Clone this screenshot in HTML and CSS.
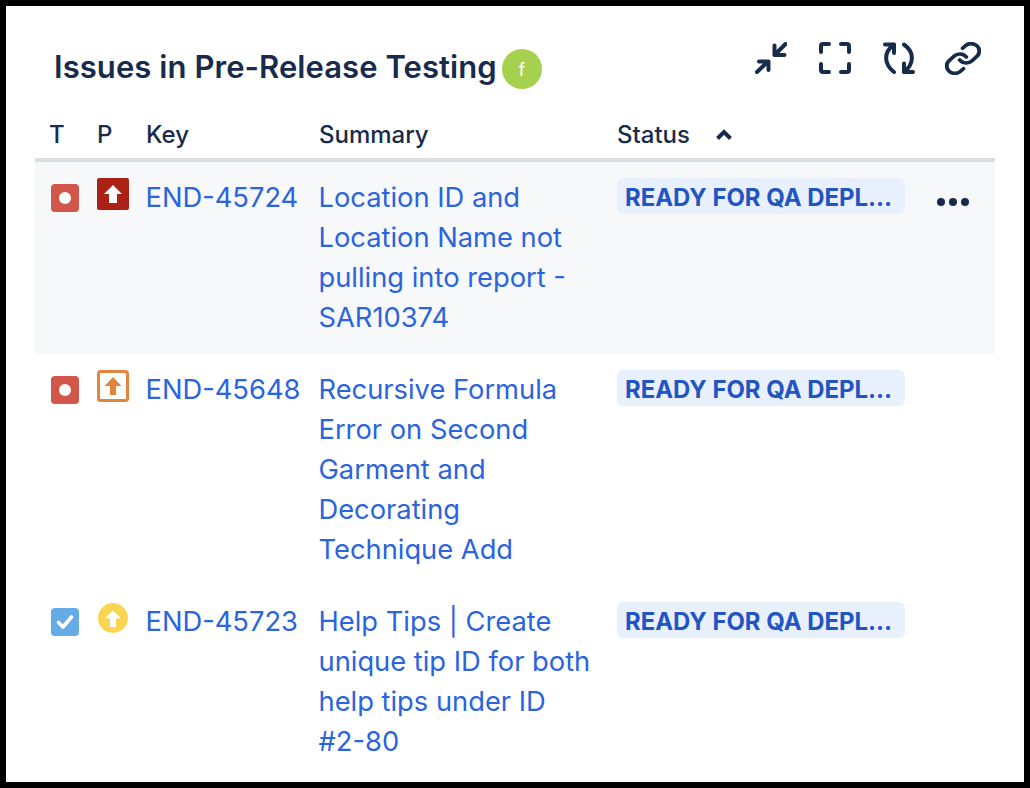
FILE: index.html
```html
<!DOCTYPE html>
<html lang="en">
<head>
<meta charset="utf-8">
<title>Issues in Pre-Release Testing</title>
<link rel="stylesheet" href="styles.css">
</head>
<body>
<main class="frame">
  <header class="top">
    <div class="title-wrap">
      <h1 class="title">Issues in Pre-Release Testing</h1>
      <span class="avatar">f</span>
    </div>
    <div class="tools">
      <svg class="tool" viewBox="0 0 32 32"><path d="M2 30 13 19.500M4 19.500h9.500V28M30.500 2 19.500 13M19.500 3.500V13H29.500"/></svg>
      <svg class="tool" viewBox="0 0 32 32"><path d="M2 10V4a2 2 0 0 1 2-2h6M22 2h6a2 2 0 0 1 2 2v6M30 22v6a2 2 0 0 1-2 2h-6M10 30H4a2 2 0 0 1-2-2v-6"/></svg>
      <svg class="tool" viewBox="0 0 32 32"><path d="M2 2.500H11V11M11 2.500C.5 10 .5 22 11 30M21 2.500C31.500 10 31.500 22 21 30M30 30H21V21.500"/></svg>
      <svg class="link" viewBox="1 1 22 22" preserveAspectRatio="none"><path d="M10 13a5 5 0 0 0 7.540.540l3-3a5 5 0 0 0-7.070-7.070l-1.720 1.710M14 11a5 5 0 0 0-7.540-.540l-3 3a5 5 0 0 0 7.070 7.070l1.710-1.710"/></svg>
    </div>
  </header>

  <div class="row head">
    <div class="narrow">T</div>
    <div class="narrow">P</div>
    <div>Key</div>
    <div>Summary</div>
    <div class="status-head">Status
      <svg class="sort" viewBox="0 0 18 12"><path d="M2.500 9.500 9 3l6.500 6.500"/></svg>
    </div>
  </div>

  <div class="row issue hover">
    <div><span class="type bug"><i class="dot"></i></span></div>
    <div>
      <svg class="prio" viewBox="0 0 32 32"><rect width="32" height="32" rx="2" fill="#ab2116"/><path class="arrow" d="M16 7 25 16H20V25H12V16H7Z"/></svg>
    </div>
    <a class="key" href="#">END-45724</a>
    <a class="summary" href="#">Location ID and Location Name not pulling into report - SAR10374</a>
    <div><span class="lozenge">READY FOR QA DEPL...</span></div>
    <div class="more"><i></i><i></i><i></i></div>
  </div>

  <div class="row issue">
    <div><span class="type bug"><i class="dot"></i></span></div>
    <div>
      <svg class="prio" viewBox="0 0 32 32"><rect x="1.500" y="1.500" width="29" height="29" rx="2" fill="#fff" stroke="#e5843f" stroke-width="3"/><path fill="#e5843f" d="M16 7 24.500 16H19V25H13V16H7.500Z"/></svg>
    </div>
    <a class="key" href="#">END-45648</a>
    <a class="summary" href="#">Recursive Formula Error on Second Garment and Decorating Technique Add</a>
    <div><span class="lozenge">READY FOR QA DEPL...</span></div>
  </div>

  <div class="row issue">
    <div><span class="type task"><svg class="check" viewBox="0 0 20 20"><path d="M3.500 10.500 8 15l8.500-10"/></svg></span></div>
    <div>
      <svg class="prio" viewBox="0 0 32 32"><circle cx="16" cy="16" r="15" fill="#f9d651"/><path class="arrow" d="M16 8.500 24 16.500H19V25H13V16.500H8Z"/></svg>
    </div>
    <a class="key" href="#">END-45723</a>
    <a class="summary" href="#">Help Tips | Create unique tip ID for both help tips under ID #2-80</a>
    <div><span class="lozenge">READY FOR QA DEPL...</span></div>
  </div>
</main>
</body>
</html>
```
FILE: styles.css
```css
* { box-sizing: border-box; }
html, body { margin: 0; height: 100%; }
body { background: #000; padding: 6px; font-family: Inter, "Liberation Sans", sans-serif; color: #172b4d; }
.frame { height: 776px; background: #fff; padding: 0 29px; overflow: hidden; }

.top { display: flex; justify-content: space-between; height: 116px; }
.title-wrap { display: flex; align-items: flex-start; padding: 39px 0 0 19px; }
.title { margin: 0; font-size: 31px; letter-spacing: .070px; line-height: 44px; font-weight: 600; color: #172b4d; }
.avatar { width: 40px; height: 40px; margin: 4px 0 0 5px; border-radius: 50%; background: #a5d14f; color: #fff; font-size: 18px; display: flex; align-items: center; justify-content: center; }
.tools { display: flex; gap: 32px; padding: 36px 14px 0 0; align-items: flex-start; }
.tool { width: 32px; height: 32px; fill: none; stroke: #172b4d; stroke-width: 4; stroke-linecap: round; stroke-linejoin: round; }
.link { width: 36px; height: 33px; margin-left: -2px; fill: none; stroke: #172b4d; stroke-width: 2.400; stroke-linecap: round; stroke-linejoin: round; }

.row { display: grid; grid-template-columns: 48px 48px 173px 298px 320px 58px; padding-left: 15px; }
.head { height: 40px; border-bottom: 4px solid #dcdde3; font-size: 24px; line-height: 26px; font-weight: 500; color: #172b4d; }
.narrow { margin-left: -1px; }
.status-head { display: flex; align-items: center; align-self: start; gap: 25px; }
.sort { width: 18px; height: 12px; fill: none; stroke: #172b4d; stroke-width: 4; }

.issue { padding-top: 16px; padding-bottom: 16px; font-size: 27.300px; line-height: 40px; }
.hover { background: #f7f8fa; }
.key, .summary { color: #2a64de; text-decoration: none; margin-left: -.500px; }
.summary { padding-right: 20px; }

.type { display: flex; align-items: center; justify-content: center; width: 28px; height: 28px; margin: 6px 0 0 1px; border-radius: 4px; }
.bug { background: #d2574a; }
.task { background: #65abe6; }
.dot { width: 12px; height: 12px; border-radius: 50%; background: #fff; }
.check { width: 20px; height: 20px; fill: none; stroke: #fff; stroke-width: 3.600; stroke-linecap: round; stroke-linejoin: round; }
.prio { display: block; width: 32px; height: 32px; margin-left: -1px; }
.arrow { fill: #fff; }

.lozenge { display: block; width: 288px; height: 36px; background: #e9f0fd; border-radius: 6px; padding: 0 8px; font-size: 23.900px; line-height: 39px; font-weight: 700; color: #2255c4; white-space: nowrap; overflow: hidden; }
.more { display: flex; gap: 4px; padding: 20px 0 0; height: 30px; }
.more i { width: 8px; height: 8px; border-radius: 50%; background: #172b4d; }
```
